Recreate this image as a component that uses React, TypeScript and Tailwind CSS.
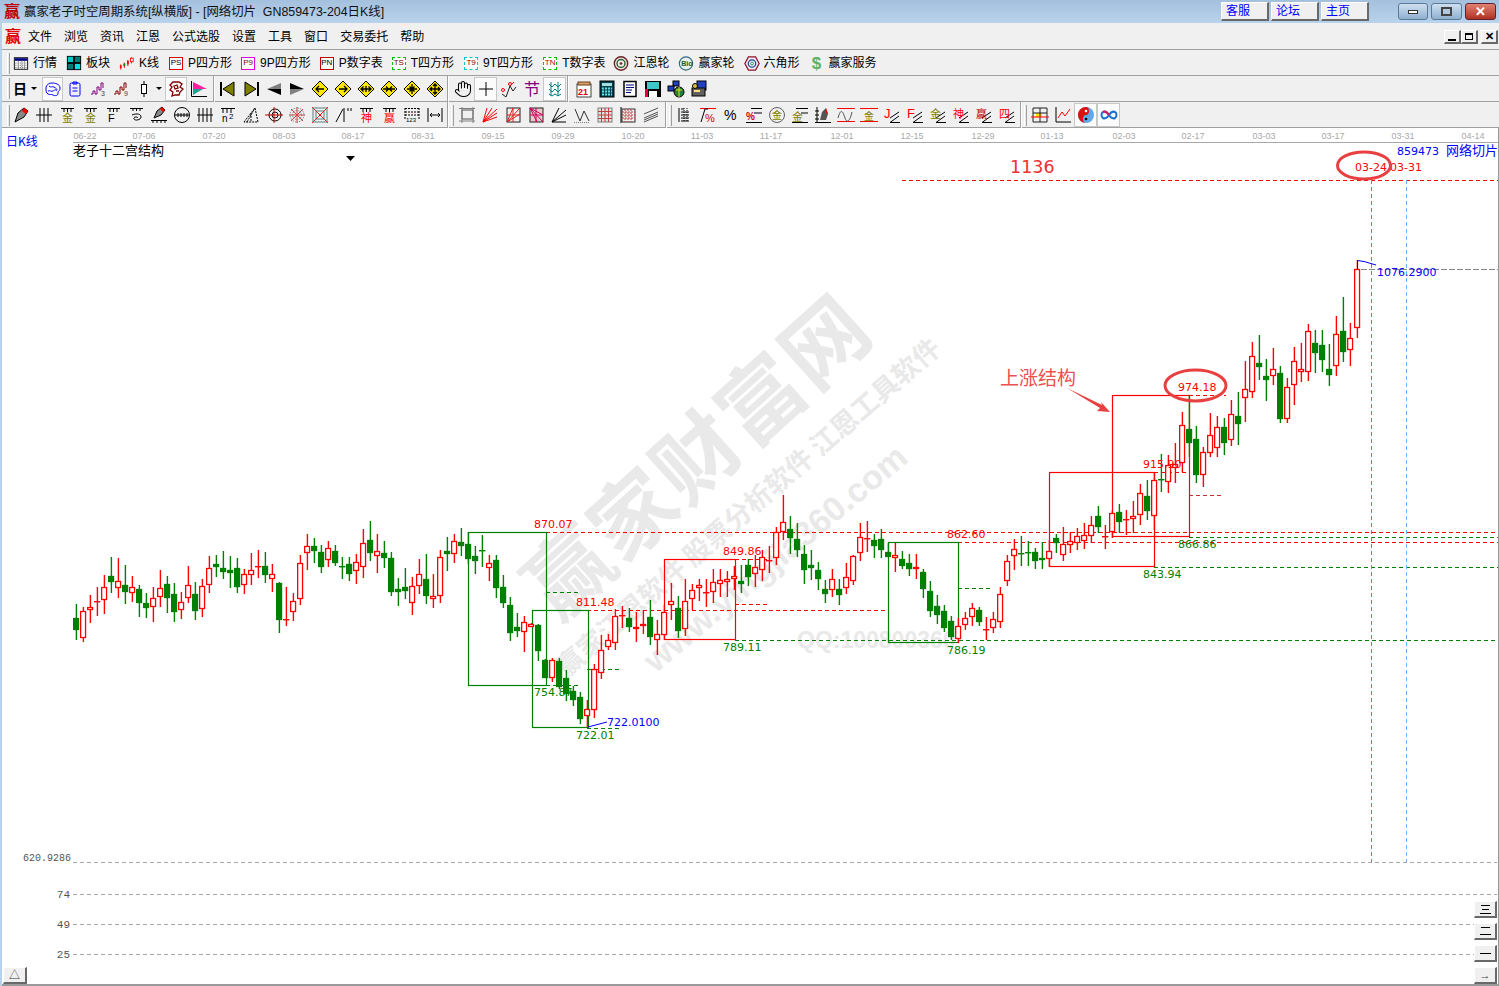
import React from 'react';
import { Hand } from 'lucide-react';

// [color, high, bodyTop, bodyBottom, low], one candle every 7px from x=76
type Candle = [string, number, number, number, number];
const CANDLES: Candle[] = [
  ['g',604,618,629,640],['r',607,611,637,642],['r',595,607,609,623],['r',587,601,601,616],['r',575,587,599,614],
  ['g',557,576,581,593],['r',558,581,587,598],['g',565,585,591,604],['r',576,587,592,602],['g',585,589,602,617],
  ['g',593,603,607,618],['r',587,598,606,622],['r',570,588,596,607],['g',576,584,597,613],['g',583,594,611,622],
  ['r',592,602,609,619],['r',566,585,597,603],['g',582,594,610,620],['r',579,586,608,617],['r',556,568,584,593],
  ['g',555,564,566,577],['g',551,568,571,579],['g',556,570,572,588],['g',558,568,586,593],['r',569,574,584,594],
  ['r',553,570,574,585],['r',550,566,566,578],['g',552,566,574,583],['r',564,574,578,592],['g',582,583,619,633],
  ['r',587,619,619,626],['r',593,601,611,621],['r',555,563,598,605],['r',534,546,552,570],['g',538,546,550,563],
  ['g',545,552,566,573],['r',541,548,559,567],['g',545,551,562,566],['g',557,566,566,579],['g',557,564,573,581],
  ['r',554,562,570,584],['r',529,543,566,578],['g',521,540,552,561],['r',534,551,555,573],['g',541,553,557,568],
  ['g',552,558,591,596],['g',578,589,591,606],['g',568,587,590,599],['r',577,586,602,615],['r',559,574,585,594],
  ['g',554,579,595,604],['r',574,596,598,608],['r',550,557,595,603],['g',537,551,553,571],['r',534,541,553,563],
  ['g',528,542,545,556],['g',532,544,558,564],['g',546,556,560,574],['g',535,550,550,567],['r',555,563,567,581],
  ['g',555,560,587,598],['g',575,587,602,608],['g',597,605,632,641],['g',613,627,630,637],['r',616,622,631,652],
  ['r',623,624,626,627],['g',624,625,650,661],['g',659,660,677,677],['r',658,660,677,682],['g',658,661,686,689],
  ['g',670,678,693,701],['g',686,691,699,706],['g',692,697,718,724],['r',700,709,715,727],['r',664,669,709,718],
  ['r',635,650,672,679],['r',634,640,646,650],['r',609,616,642,650],['r',606,615,615,628],['g',608,618,626,632],
  ['r',612,627,628,642],['r',610,624,625,634],['g',600,617,636,645],['r',620,634,639,655],['r',605,612,634,640],
  ['r',583,601,604,620],['g',596,608,630,638],['r',579,601,628,636],['r',584,590,598,610],['r',579,585,587,601],
  ['r',579,592,592,607],['r',569,582,591,603],['r',569,580,583,597],['r',571,579,581,597],['r',566,576,578,590],
  ['g',565,581,583,593],['g',559,565,576,586],['r',555,567,573,587],['r',550,557,569,581],['r',546,560,560,573],
  ['r',527,532,557,565],['r',495,522,531,540],['g',516,529,537,554],['g',523,539,549,557],['g',545,554,569,584],
  ['g',550,565,567,580],['g',562,570,578,590],['g',580,589,593,603],['r',569,579,589,597],['g',579,589,594,605],
  ['r',563,577,587,594],['r',555,556,580,585],['r',523,537,552,561],['r',521,538,538,552],['g',534,540,545,558],
  ['g',529,539,549,558],['g',543,552,556,557],['r',543,555,557,572],['g',551,559,565,569],['g',554,563,568,576],
  ['r',554,567,568,579],['g',569,572,588,598],['g',581,591,610,617],['g',595,606,614,624],['g',605,611,627,632],
  ['g',616,621,636,640],['r',618,626,638,643],['r',612,618,624,630],['r',603,608,616,626],['g',607,610,621,626],
  ['r',617,629,629,640],['r',612,619,627,633],['r',587,594,621,628],['r',555,561,580,586],['r',539,549,555,570],
  ['g',536,553,553,566],['g',541,552,552,566],['g',548,552,560,569],['g',542,558,559,569],['r',540,551,558,567],
  ['g',534,538,542,553],['r',527,544,554,561],['r',532,541,544,553],['r',528,536,542,550],['r',523,535,540,549],
  ['r',516,525,535,543],['g',506,516,526,533],['r',525,536,536,549],['r',510,513,531,538],['g',504,512,521,533],
  ['r',510,519,519,535],['r',501,516,518,533],['r',484,493,514,525],['g',480,496,510,520],['r',472,480,515,530],
  ['g',454,479,479,492],['r',455,465,481,493],['r',443,464,467,483],['r',412,425,462,472],['g',395,429,442,457],
  ['g',426,439,474,483],['r',447,452,474,487],['r',413,435,452,457],['r',416,427,447,457],['g',418,427,442,455],
  ['r',400,414,439,446],['g',392,416,423,445],['r',361,389,397,422],['r',342,356,391,398],['g',335,363,366,380],
  ['g',359,376,379,401],['r',348,369,375,385],['g',366,373,418,423],['r',378,387,418,423],['r',347,361,384,405],
  ['r',343,369,371,382],['r',324,331,371,381],['g',330,343,352,373],['g',330,345,359,372],['g',344,369,374,386],
  ['r',316,334,365,376],['g',297,331,351,362],['r',323,338,349,366],['r',260,269,327,338],
];

const DATES: [string, number][] = [
  ['06-22',85],['07-06',144],['07-20',214],['08-03',284],['08-17',353],['08-31',423],['09-15',493],
  ['09-29',563],['10-20',633],['11-03',702],['11-17',771],['12-01',842],['12-15',912],['12-29',983],
  ['01-13',1052],['02-03',1124],['02-17',1193],['03-03',1264],['03-17',1333],['03-31',1403],['04-14',1473],
];

const RED = '#ff0000';
const GREEN = '#008000';
const BLUE = '#0000ff';

// level lines of the chart: y, x1, x2, color
const DASHES: [number, number, number, string][] = [
  [180,902,1499,RED],[532,546,1499,RED],[542,958,1499,RED],[537,1189,1499,GREEN],[567,1154,1499,GREEN],
  [640,735,1499,GREEN],[610,587,888,RED],[592,546,580,GREEN],[685,546,580,GREEN],[669,587,622,GREEN],
  [728,587,622,GREEN],[559,735,770,RED],[604,735,770,RED],[588,958,993,GREEN],[472,1154,1190,RED],
  [395,1189,1226,RED],[495,1189,1224,'#c03030'],
];

// boxes: x, y, w, h, color
const BOXES: [number, number, number, number, string][] = [
  [468,532,78,153,GREEN],[532,610,56,117,GREEN],[664,559,71,80,RED],[888,542,70,100,GREEN],
  [1049,472,105,94,RED],[1112,395,77,141,RED],
];

const LABELS: [string, number, number, string][] = [
  ['870.07',534,528,RED],['811.48',576,606,RED],['849.86',723,555,RED],['862.60',947,538,RED],
  ['915.90',1143,468,RED],['974.18',1178,391,RED],['754.87',534,696,GREEN],['722.01',576,739,GREEN],
  ['789.11',723,651,GREEN],['786.19',947,654,GREEN],['843.94',1143,578,GREEN],['866.86',1178,548,GREEN],
  ['722.0100',607,726,BLUE],['1076.2900',1377,276,BLUE],['03-24',1355,171,RED],['03-31',1390,171,RED],
];

function Ico({ children, size = 18 }: { children: React.ReactNode; size?: number }) {
  return (
    <svg width={size} height={size} viewBox="0 0 18 18" fill="none" stroke="#000" strokeWidth="1">
      {children}
    </svg>
  );
}

function Tiny({ x, y, s = 8, c = '#000', w = 400, t }: { x: number; y: number; s?: number; c?: string; w?: number; t: string }) {
  return (
    <text x={x} y={y} fontSize={s} fontWeight={w} fill={c} stroke="none" className="[font-family:'Liberation_Sans','Noto_Sans_CJK_SC',sans-serif]">
      {t}
    </text>
  );
}

function Diamond({ d }: { d: string }) {
  return (
    <Ico>
      <polygon points="9,1 17,9 9,17 1,9" fill="#ffe800" stroke="#000" />
      <path d={d} strokeWidth="1.3" />
    </Ico>
  );
}

function Fan({ c = RED }: { c?: string }) {
  return (
    <Ico>
      <path d="M2 16L16 3M2 16L16 7M2 16L16 11M2 16L11 2M2 16L6 2" stroke={c} />
    </Ico>
  );
}

function TopLined({ t, c, s = 11, bars = 3 }: { t: string; c: string; s?: number; bars?: number }) {
  return (
    <Ico>
      <path d="M3 2.5h13" />
      {bars > 0 && <path d="M6 2v4M9.5 2v4M13 2v4" />}
      <Tiny x={9.5 - s / 2} y={16} s={s} c={c} t={t} />
    </Ico>
  );
}

function SlopeText({ t, c, s = 11 }: { t: string; c: string; s?: number }) {
  return (
    <Ico>
      <path d="M7 16.5h10M7 12l9-6M7 16.5l9-6.5" />
      <Tiny x={1} y={12} s={s} c={c} t={t} />
    </Ico>
  );
}

const T1_ICONS = {
  table: (
    <Ico size={17}>
      <rect x="1.5" y="2.5" width="15" height="13" fill="#fff" />
      <rect x="2" y="3" width="14" height="3" fill="#000080" stroke="none" />
      <path d="M2 8.5h14M2 11h14M2 13.5h14M6 6v9M10 6v9M13 6v9" stroke="#555" strokeDasharray="1 1" />
    </Ico>
  ),
  blocks: (
    <Ico size={18}>
      <rect x="1" y="1" width="16" height="16" fill="#000" stroke="none" />
      <rect x="2" y="2" width="6" height="6" fill="#00c8c8" stroke="none" />
      <rect x="10" y="2" width="6" height="6" fill="#007878" stroke="none" />
      <rect x="2" y="10" width="6" height="6" fill="#007878" stroke="none" />
      <rect x="10" y="10" width="6" height="6" fill="#00e0e0" stroke="none" />
    </Ico>
  ),
  kline: (
    <Ico size={17}>
      <path d="M2 10v6M6 8v6M10 5v7" stroke={RED} />
      <rect x="1" y="11" width="2" height="3" fill={RED} stroke="none" />
      <rect x="5" y="9" width="2" height="3" fill={GREEN} stroke="none" />
      <rect x="9" y="6" width="2" height="4" fill={RED} stroke="none" />
      <path d="M14 2v7" stroke={RED} />
      <rect x="13" y="3" width="3" height="4" fill="#fff" stroke={RED} />
    </Ico>
  ),
  wheel: (
    <Ico size={17}>
      <circle cx="9" cy="9" r="7.5" fill="#eee" stroke="#702020" strokeWidth="1.6" />
      <circle cx="9" cy="9" r="4.5" stroke="#306030" strokeWidth="1.6" />
      <circle cx="9" cy="9" r="1.5" fill="#702020" stroke="none" />
    </Ico>
  ),
  bio: (
    <Ico size={17}>
      <circle cx="9" cy="9" r="7.5" fill="#e8f0e8" stroke="#306880" strokeWidth="1.3" />
      <Tiny x={3.6} y={12} s={8} c="#206020" w={700} t="Bio" />
    </Ico>
  ),
  hex: (
    <Ico size={17}>
      <polygon points="5,1.5 13,1.5 17,9 13,16.5 5,16.5 1,9" stroke="#901030" strokeWidth="1.4" />
      <circle cx="9" cy="9" r="4.2" stroke="#2040a0" strokeWidth="1.4" />
      <circle cx="9" cy="9" r="1.6" stroke="#208080" />
    </Ico>
  ),
};

function LetterBox({ t, border, text, dashed }: { t: string; border: string; text: string; dashed?: boolean }) {
  return (
    <span className={`w-[14px] h-[13px] flex items-center justify-center border text-[8px] leading-none bg-white ${border} ${text} ${dashed ? 'border-dashed' : ''}`}>
      {t}
    </span>
  );
}

const T1_ITEMS: [React.ReactNode, string][] = [
  [T1_ICONS.table, '行情'],
  [T1_ICONS.blocks, '板块'],
  [T1_ICONS.kline, 'K线'],
  [<LetterBox t="PS" border="border-[#e00000]" text="text-black" />, 'P四方形'],
  [<LetterBox t="P9" border="border-[#e000e0]" text="text-[#800000]" />, '9P四方形'],
  [<LetterBox t="PN" border="border-[#c00000]" text="text-black" />, 'P数字表'],
  [<LetterBox t="TS" border="border-[#00c000]" text="text-[#800000]" dashed />, 'T四方形'],
  [<LetterBox t="T9" border="border-[#00c8c8]" text="text-[#800000]" dashed />, '9T四方形'],
  [<LetterBox t="TN" border="border-[#00c000]" text="text-[#c00000]" dashed />, 'T数字表'],
  [T1_ICONS.wheel, '江恩轮'],
  [T1_ICONS.bio, '赢家轮'],
  [T1_ICONS.hex, '六角形'],
  [<span className="w-[16px] text-center text-[17px] leading-none font-bold text-[#60b060]">$</span>, '赢家服务'],
];

const ARROW_LEFT = 'M13 9H5M8 6L5 9l3 3';
const ARROW_RIGHT = 'M5 9h8M10 6l3 3-3 3';
const ARROW_BOTH = 'M4 9h10M6.5 6.5L4 9l2.5 2.5M11.5 6.5L14 9l-2.5 2.5M9 6v6';
const ARROW_IN = 'M3 9h12M6 6.5L8.5 9 6 11.5M12 6.5L9.5 9l2.5 2.5';
const ARROW_CROSS = 'M4 9h10M9 4v10M6.5 6.5l5 5M11.5 6.5l-5 5';
const ARROW_OUT = 'M4 9h10M9 4v10M7 6l2-2 2 2M7 12l2 2 2-2M6 7L4 9l2 2M12 7l2 2-2 2';

const T2_ICONS: Record<string, React.ReactNode> = {
  brain: (
    <Ico>
      <path d="M2 8c0-3 3-5 6-5s8 1 8 5-2 2-2 5-3 3-5 2-3 0-5-1-2-3-2-6zM5 6c2 2 3 0 5 1s3 2 3 3M4 11c2-1 3 1 5 0s2-2 4 0" stroke={BLUE} />
    </Ico>
  ),
  clip: (
    <Ico>
      <rect x="4" y="3" width="10" height="13" rx="1.5" stroke={BLUE} />
      <path d="M7 2h4v2H7zM6.5 8h5M6.5 11h5" stroke={BLUE} />
    </Ico>
  ),
  stair3: (
    <Ico>
      <path d="M2 14h2v-3h2v3h2V7h2v3h2V3h2v5" stroke="#800080" />
      <Tiny x={12} y={16} s={7} c="#404040" t="3" />
    </Ico>
  ),
  stair9: (
    <Ico>
      <path d="M2 14h2v-3h2v3h2V7h2v3h2V3h2v5" stroke="#800000" />
      <Tiny x={12} y={16} s={7} c="#404040" t="9" />
    </Ico>
  ),
  candle: (
    <Ico>
      <path d="M9 1v4M9 13v4" />
      <rect x="6.5" y="4.5" width="5" height="9" fill="#fff" />
    </Ico>
  ),
  wave: (
    <Ico>
      <path d="M6 2h6l3 2-2 3 3 2-3 3-1 3H8l-3 1 1-4-3-2 2-3-2-2zM7 6l3-1 1 3-3 1zM9 11h3" stroke="#800000" strokeWidth="1.3" />
    </Ico>
  ),
  flag: (
    <Ico>
      <path d="M1.5 1v15.5H17" />
      <polygon points="3,2 17,9 3,9" fill="#ff20a0" stroke="none" />
      <polygon points="3,9 13,9 3,15" fill="#20a090" stroke="none" />
    </Ico>
  ),
  first: (
    <Ico>
      <rect x="1" y="2" width="2" height="14" fill="#000" stroke="none" />
      <polygon points="4,9 15,2 15,16" fill="#808000" stroke="#000" />
    </Ico>
  ),
  last: (
    <Ico>
      <rect x="15" y="2" width="2" height="14" fill="#000" stroke="none" />
      <polygon points="14,9 3,2 3,16" fill="#808000" stroke="#000" />
    </Ico>
  ),
  back: (
    <Ico>
      <polygon points="2,9 16,3 16,9" fill="#808080" stroke="none" />
      <polygon points="2,9 16,9 16,15" fill="#000" stroke="none" />
    </Ico>
  ),
  forward: (
    <Ico>
      <polygon points="16,9 2,3 2,9" fill="#000" stroke="none" />
      <polygon points="16,9 2,9 2,15" fill="#808080" stroke="none" />
    </Ico>
  ),
  plus: (
    <Ico>
      <path d="M9 2v14M2 9h14" />
    </Ico>
  ),
  vline: (
    <Ico>
      <path d="M2 14l4 3 4-11 3 5 3-4" stroke="#202020" />
      <path d="M10 6l4-4" stroke={RED} />
      <circle cx="3" cy="10" r="1.5" stroke={RED} />
      <circle cx="10" cy="4" r="1.5" stroke={RED} />
    </Ico>
  ),
  jie: (
    <Ico>
      <Tiny x={1} y={15} s={16} c="#800080" t="节" />
    </Ico>
  ),
  zigzag: (
    <Ico>
      <path d="M3 4l3 3 3-3 3 3 3-3M3 9l3 3 3-3 3 3 3-3M3 14l3 2 3-2 3 2 3-2M5 2v14M12 2v14" stroke="#008080" />
    </Ico>
  ),
  calendar: (
    <Ico>
      <rect x="2" y="4" width="14" height="13" fill="#fff" stroke="#404040" />
      <rect x="3" y="2" width="12" height="3" fill="#e0a060" stroke="#604020" />
      <Tiny x={3} y={15} s={9} c="#e00000" w={700} t="21" />
    </Ico>
  ),
  calc: (
    <Ico>
      <rect x="2" y="1" width="14" height="16" fill="#004050" stroke="#000" />
      <rect x="4" y="3" width="10" height="3" fill="#a0e0e0" stroke="none" />
      <path d="M4 8.5h10M4 11.5h10M4 14.5h10" stroke="#60e0e0" strokeDasharray="2 1" strokeWidth="2" />
    </Ico>
  ),
  doc: (
    <Ico>
      <rect x="3" y="1.5" width="12" height="15" fill="#fff" stroke="#000" strokeWidth="1.5" />
      <path d="M5 5h8M5 7.5h8M5 10h6M5 12.5h5" stroke="#000080" />
    </Ico>
  ),
  floppy: (
    <Ico>
      <rect x="1" y="1" width="16" height="16" fill="#000" stroke="none" />
      <rect x="3" y="2" width="12" height="7" fill="#40c8c8" stroke="none" />
      <rect x="5" y="11" width="8" height="6" fill="#fff" stroke="none" />
      <rect x="1" y="9" width="3" height="8" fill="#e00040" stroke="none" />
    </Ico>
  ),
  net: (
    <Ico>
      <rect x="6" y="1" width="6" height="5" fill="#2040c0" stroke="#000" />
      <rect x="1" y="6" width="6" height="5" fill="#2040c0" stroke="#000" />
      <circle cx="12" cy="12" r="5" fill="#208040" stroke="#000" />
      <path d="M9 10h6M12 7v10" stroke="#e0e020" />
    </Ico>
  ),
  print: (
    <Ico>
      <rect x="7" y="1" width="9" height="9" fill="#2040c0" stroke="#000" />
      <rect x="2" y="8" width="13" height="8" fill="#606060" stroke="#000" />
      <rect x="4" y="10" width="6" height="2" fill="#ffe080" stroke="none" />
      <circle cx="5" cy="6" r="2.5" fill="#e0c040" stroke="#000" />
    </Ico>
  ),
};

const T3_LEFT: React.ReactNode[] = [
  <Ico>
    <polygon points="3,16 6,7 12,2 16,5 12,11" fill="#888" stroke="#000" />
    <polygon points="12,2 16,5 14,8 10,5" fill={RED} stroke="none" />
  </Ico>,
  <Ico><path d="M5 2v14M9 2v14M13 2v14M1 9h16" /></Ico>,
  <TopLined t="金" c="#808000" />,
  <TopLined t="金" c="#808000" />,
  <TopLined t="F" c="#000" />,
  <Ico>
    <path d="M3 2.5h13M6 2v3M9.5 2v3M13 2v3" />
    <path d="M5 9c5-2 9-1 9 2s-6 4-7 2 3-3 4-1" />
  </Ico>,
  <Ico>
    <polygon points="4,12 7,5 12,1 15,4 11,9" fill="#888" stroke="#000" />
    <polygon points="12,1 15,4 13,6 10,3" fill={RED} stroke="none" />
    <path d="M1 14.5h16M3 14v3M7 14v3M11 14v3M15 14v3" />
  </Ico>,
  <Ico>
    <circle cx="9" cy="9" r="7.5" />
    <path d="M2 9h14M5 7v4M8 7v4M11 7v4M14 7v4" />
  </Ico>,
  <Ico><path d="M3 2v14M7 2v14M11 2v14M15 2v14M1 9h16" /></Ico>,
  <Ico>
    <path d="M2 2.5h14M4 2v5M8 2v5M12 2v5" />
    <Tiny x={3} y={16} s={10} t="n" />
    <Tiny x={10} y={13} s={8} t="2" />
  </Ico>,
  <Ico>
    <path d="M2 16L13 2l3 14zM9 7v9M5 16l8-14" strokeDasharray="2 1" />
  </Ico>,
  <Ico>
    <circle cx="10" cy="9" r="6" />
    <circle cx="10" cy="9" r="3" />
    <path d="M0 9h18M9 1v16" stroke="#d00000" />
  </Ico>,
  <Ico>
    <circle cx="9" cy="9" r="7" stroke="#508080" strokeDasharray="1 1" />
    <circle cx="9" cy="9" r="4.5" stroke="#508080" strokeDasharray="1 1" />
    <path d="M1 9h16M9 1v16M3 3l12 12M15 3L3 15" stroke="#d04040" />
  </Ico>,
  <Ico>
    <rect x="2" y="2" width="14" height="14" stroke="#508080" />
    <rect x="5" y="5" width="8" height="8" stroke="#508080" />
    <path d="M1 1l16 16M17 1L1 17" stroke="#e03030" />
    <rect x="8" y="8" width="2" height="2" fill={RED} stroke="none" />
  </Ico>,
  <Ico><path d="M2 16L9 3M10 2v14M14 2v3M17 2v3" /></Ico>,
  <TopLined t="神" c={RED} />,
  <TopLined t="赢" c={RED} />,
  <Ico>
    <path d="M2 2.5h14M2 2v12M16 2v12M2 6h14M2 9h14" strokeDasharray="2 1" />
    <Tiny x={3} y={16} s={6} t="123" />
  </Ico>,
  <Ico>
    <path d="M2 2v14M16 2v14M4 9h10M6 7L4 9l2 2M12 7l2 2-2 2" />
  </Ico>,
];

const T3_MID: React.ReactNode[] = [
  <Ico>
    <rect x="4" y="4" width="11" height="9" stroke="#505050" />
    <path d="M1 2.5h16M4 1v16M15 1v16M1 15h16" stroke="#808080" />
  </Ico>,
  <Fan />,
  <Ico>
    <rect x="3" y="2" width="13" height="14" stroke="#202020" />
    <path d="M3 16L16 2M3 16L16 8M3 16L9 2M3 9h13M9 2v14" stroke="#e02020" />
  </Ico>,
  <Ico>
    <rect x="3" y="2" width="13" height="14" fill="#e8c8c8" stroke="#202020" />
    <path d="M3 2L16 16M3 2l13 7M3 2l7 14M3 9h13M9 2v14" stroke="#d00060" />
  </Ico>,
  <Ico><path d="M2 16L16 4M2 16L16 9M2 16h14M2 16L9 2" /></Ico>,
  <Ico>
    <path d="M2 3l5 12 4-10 5 10" stroke="#303030" />
    <path d="M1 16.5h16" stroke="#808080" strokeDasharray="1 1" />
  </Ico>,
  <Ico>
    <rect x="2" y="2" width="14" height="14" fill="#e0e0e0" stroke="#808080" />
    <path d="M2 5.5h14M2 9h14M2 12.5h14M5.5 2v14M9 2v14M12.5 2v14" stroke="#c04040" />
  </Ico>,
  <Ico>
    <rect x="3" y="3" width="13" height="13" stroke="#303030" />
    <path d="M3 6h13M3 9h13M3 12h13M6 3v13M9 3v13M12 3v13" stroke="#c04040" strokeDasharray="2 1" />
    <path d="M2 1v16" />
  </Ico>,
  <Ico>
    <path d="M2 8l14-6M2 12l14-6M2 16l14-6M2 14l14-6" stroke="#505050" />
  </Ico>,
];

const T3_RIGHT: React.ReactNode[] = [
  <Ico>
    <path d="M3 2v14M5 3h3M5 6h8M5 9h8M5 12h8M5 15h8" />
    <path d="M8 2v14M11 2v14" strokeDasharray="1 1" />
  </Ico>,
  <Ico>
    <path d="M1 2.5h16" stroke={RED} />
    <path d="M2 16l4-13h3" />
    <Tiny x={6} y={16} s={11} c="#d00000" t="%" />
  </Ico>,
  <Ico><Tiny x={2} y={14} s={14} t="%" /></Ico>,
  <Ico>
    <path d="M6 2.5h11M9 7h8M1 16.5h16" />
    <Tiny x={1} y={14} s={10} c="#d00000" w={700} t="%" />
  </Ico>,
  <Ico>
    <circle cx="9" cy="9" r="7.5" stroke="#606060" />
    <Tiny x={4} y={13} s={10} c="#808000" t="金" />
  </Ico>,
  <Ico>
    <path d="M5 2.5h12M10 7h7M1 16.5h16" />
    <Tiny x={1} y={15} s={11} c="#808000" t="金" />
  </Ico>,
  <Ico>
    <path d="M3 1v16M1 5h4M1 9h4M1 13h4M1 16.5h16" />
    <polygon points="6,14 8,6 12,2 14,8 12,14" fill="#555" stroke="none" />
    <polygon points="12,2 14,8 11,6" fill={RED} stroke="none" />
  </Ico>,
  <Ico>
    <path d="M0 2.5h18M0 15.5h18" stroke={RED} />
    <path d="M1 12c3-11 5-6 7 0s5 3 7-6" stroke="#505050" />
  </Ico>,
  <Ico>
    <path d="M0 2.5h18M0 15.5h18" stroke={RED} />
    <Tiny x={4} y={13.5} s={10} c="#808000" t="金" />
  </Ico>,
  <SlopeText t="J" c={RED} s={13} />,
  <SlopeText t="F" c={RED} s={13} />,
  <SlopeText t="金" c="#808000" />,
  <SlopeText t="神" c={RED} />,
  <SlopeText t="赢" c="#c00000" />,
  <SlopeText t="四" c={RED} />,
];

const T3_END: React.ReactNode[] = [
  <Ico>
    <rect x="5" y="7" width="6" height="4" fill="#ffe000" stroke="none" />
    <path d="M2 2h14v14H2zM2 7h14M9 2v14" stroke="#202020" />
    <path d="M0 11h18" stroke={RED} />
  </Ico>,
  <Ico>
    <path d="M2 1v15h15" />
    <path d="M4 12l4-6 3 4 5-7" stroke={RED} />
  </Ico>,
  <Ico>
    <circle cx="9" cy="9" r="8" fill="#60a8e8" stroke="none" />
    <path d="M9 1a8 8 0 0 0 0 16c-4 0-4-8 0-8s4-8 0-8z" fill="#e01010" stroke="none" />
    <circle cx="9" cy="5" r="1.3" fill="#fff" stroke="none" />
    <circle cx="9" cy="13" r="1.3" fill="#000" stroke="none" />
  </Ico>,
  <Ico>
    <path d="M9 9c-2-3-4-4-6-3s-2 5 0 6 4 0 6-3 4-4 6-3 2 5 0 6-4 0-6-3z" stroke="#2070d0" strokeWidth="2" />
    <path d="M9 9c-2-3-4-4-6-3" stroke="#d02060" strokeWidth="2" />
  </Ico>,
];

function Grip() {
  return <span className="w-[3px] h-[21px] border-l border-l-white border-r border-r-[#a0a0a0] bg-[#e8e8e8]" />;
}

function Sep() {
  return <span className="w-[2px] h-[26px] border-l border-l-[#a0a0a0] border-r border-r-white" />;
}

function Slot({ children, on, width = 'w-[23px]' }: { children: React.ReactNode; on?: boolean; width?: string }) {
  return (
    <span className={`h-[24px] flex items-center justify-center shrink-0 ${width} ${on ? 'bg-[#fbfbfb] border border-[#c8c8c8]' : ''}`}>
      {children}
    </span>
  );
}

function DropArrow() {
  return <span className="w-0 h-0 border-x-[3px] border-x-transparent border-t-[3px] border-t-black" />;
}

function Bevel({ className, children }: { className: string; children?: React.ReactNode }) {
  return (
    <div className={`flex items-center justify-center bg-[#f0f0f0] border-t border-l border-t-white border-l-white border-r-2 border-b-2 border-r-[#696969] border-b-[#696969] ${className}`}>
      {children}
    </div>
  );
}

function Chart() {
  const cjk = "[font-family:'Noto_Sans_CJK_SC',sans-serif]";
  const num = "[font-family:'DejaVu_Sans','Noto_Sans_CJK_SC',sans-serif]";
  const wm = "[font-family:'Noto_Sans_CJK_SC',sans-serif] font-bold";
  return (
    <svg className="absolute top-0 left-0" width="1496" height="856" viewBox="2 128 1496 856">
      {/* date axis */}
      {DATES.map(([d, x]) => (
        <text key={d} x={x} y={139} textAnchor="middle" fontSize="9" fill="#a8a8a8" className="[font-family:'Liberation_Sans',sans-serif]">{d}</text>
      ))}
      <line x1="73" x2="1499" y1="142.5" y2="142.5" stroke="#a8a8a8" />

      {/* watermark */}
      <g fill="#e9e9e9">
        <text transform="translate(698,457) rotate(-42)" y="30" textAnchor="middle" fontSize="84" letterSpacing="2" className={wm}>赢家财富网</text>
        <text transform="translate(748,507) rotate(-41)" y="10" textAnchor="middle" fontSize="27" className={wm}>赢家江恩软件 股票分析软件 江恩工具软件</text>
        <text transform="translate(775,558) rotate(-40)" y="12" textAnchor="middle" fontSize="34" className="[font-family:'Liberation_Sans',sans-serif] font-bold">www.yingjia360.com</text>
        <text x="797" y="648" fontSize="23" className="[font-family:'Liberation_Sans',sans-serif] font-bold">QQ:100800360</text>
      </g>

      {/* price levels */}
      {DASHES.map(([y, x1, x2, c], i) => (
        <line key={i} x1={x1} x2={x2} y1={y + 0.5} y2={y + 0.5} stroke={c} strokeDasharray="4 3" />
      ))}
      <line x1="1371.5" x2="1371.5" y1="180" y2="862" stroke="#cc6060" strokeDasharray="4 3" />
      <line x1="1406.5" x2="1406.5" y1="180" y2="862" stroke="#66b2ff" strokeDasharray="4 3" />
      <line x1="1361" x2="1499" y1="269.5" y2="269.5" stroke="#888" strokeDasharray="6 2" />
      {[862, 894].map((y) => (
        <line key={y} x1="73" x2="1497" y1={y + 0.5} y2={y + 0.5} stroke="#a8a8a8" strokeDasharray="4 3" />
      ))}
      {[924, 954].map((y) => (
        <line key={y} x1="73" x2="1474" y1={y + 0.5} y2={y + 0.5} stroke="#a8a8a8" strokeDasharray="4 3" />
      ))}

      {/* structure boxes */}
      {BOXES.map(([x, y, w, h, c], i) => (
        <rect key={i} x={x + 0.5} y={y + 0.5} width={w} height={h} fill="none" stroke={c} strokeWidth="1.2" />
      ))}

      {/* candles */}
      {CANDLES.map(([c, hi, top, bot, lo], i) => {
        const x = 76 + i * 7;
        const col = c === 'r' ? RED : GREEN;
        return (
          <g key={i}>
            <rect x={x - 0.3} y={hi} width="1.4" height={lo - hi} fill={col} />
            {bot <= top ? (
              <rect x={x - 3} y={top} width="6.4" height="1.4" fill={col} />
            ) : (
              <rect x={x - 2.35} y={top + 0.5} width="4.9" height={bot - top} fill={c === 'r' ? '#fff' : col} stroke={col} strokeWidth="1.3" />
            )}
          </g>
        );
      })}

      {/* blue pointers */}
      <path d="M588 727L607 722M1357.5 269V260.5L1364 261.5L1376 265" fill="none" stroke={BLUE} />

      {/* labels */}
      {LABELS.map(([t, x, y, c]) => (
        <text key={t} x={x} y={y} fontSize="11" fill={c} className={num}>{t}</text>
      ))}
      <text x="1010" y="173" fontSize="17.5" fill="#ee3030" className={num}>1136</text>
      <text x="6" y="146" fontSize="12" fill={BLUE} className={cjk}>日K线</text>
      <text x="73" y="155" fontSize="13" fill="#000" className={cjk}>老子十二宫结构</text>
      <polygon points="346,156 355,156 350.5,161" fill="#000" />
      <text x="1397" y="155" fontSize="11" fill={BLUE} className={num}>859473</text>
      <text x="1446" y="155" fontSize="13" fill={BLUE} className={cjk}>网络切片</text>
      <text x="23" y="861" fontSize="10" fill="#555" className="[font-family:'Liberation_Mono',monospace]">620.9286</text>
      {[['74', 898], ['49', 928], ['25', 958]].map(([t, y]) => (
        <text key={t} x="70" y={y} textAnchor="end" fontSize="11" fill="#555" className="[font-family:'Liberation_Mono',monospace]">{t}</text>
      ))}

      {/* hand drawn notes */}
      <ellipse cx="1364" cy="165.5" rx="26.5" ry="13.5" fill="none" stroke="#e84040" strokeWidth="3" />
      <ellipse cx="1195.5" cy="385.5" rx="30.5" ry="15.5" fill="none" stroke="#e84040" strokeWidth="3" />
      <text x="1000" y="385" fontSize="19" fill="#ec5050" className={cjk}>上涨结构</text>
      <polygon points="1067,388 1102,405 1101,402 1110,412 1097,411 1100,408" fill="#e84040" />
    </svg>
  );
}

export default function App() {
  return (
    <div className="w-[1499px] h-[986px] flex flex-col overflow-hidden pl-[2px] bg-[#b9d1ea] text-[12px] text-black [font-family:'Liberation_Sans','Noto_Sans_CJK_SC',sans-serif]">
      {/* title bar */}
      <div className="h-[23px] -ml-[2px] flex items-center shrink-0 bg-linear-to-b from-[#a3c0dd] to-[#bad3ec]">
        <span className="w-[24px] text-center text-[16px] leading-none font-bold text-[#c00000]">赢</span>
        <span className="whitespace-pre pt-px text-[12.4px] text-[#111]">赢家老子时空周期系统[纵横版] - [网络切片  GN859473-204日K线]</span>
        <div className="ml-auto flex items-center gap-[2px] text-[12px] text-[#0000ff]">
          {['客服', '论坛', '主页'].map((t) => (
            <Bevel key={t} className="w-[48px] h-[19px] !justify-start pl-[4px]">{t}</Bevel>
          ))}
        </div>
        <div className="ml-[29px] mr-[3px] flex items-center gap-[3px]">
          <div className="w-[30px] h-[17px] flex items-center justify-center rounded-[3px] border border-[#5a7a9a] bg-linear-to-b from-[#cfe0f0] to-[#8fb0cf]">
            <span className="w-[10px] h-[4px] bg-white border border-[#333]" />
          </div>
          <div className="w-[31px] h-[17px] flex items-center justify-center rounded-[3px] border border-[#5a7a9a] bg-linear-to-b from-[#cfe0f0] to-[#8fb0cf]">
            <span className="w-[11px] h-[9px] bg-[#b0c8e0] border-2 border-[#444]" />
          </div>
          <div className="w-[31px] h-[17px] flex items-center justify-center rounded-[3px] border border-[#602030] bg-linear-to-b from-[#e08070] to-[#b03020] text-[13px] leading-none font-bold text-white">
            ✕
          </div>
        </div>
      </div>

      {/* menu bar */}
      <div className="h-[27px] flex items-center shrink-0 pr-[1px] pt-px bg-[#f0f0f0] border-b border-[#a0a0a0]">
        <span className="w-[22px] mr-[4px] text-center text-[16px] leading-none font-bold text-[#e00000]">赢</span>
        <div className="flex gap-[12px]">
          {['文件', '浏览', '资讯', '江恩', '公式选股', '设置', '工具', '窗口', '交易委托', '帮助'].map((m) => (
            <span key={m}>{m}</span>
          ))}
        </div>
        <div className="ml-auto flex items-center">
          <Bevel className="w-[17px] h-[14px] text-[10px] leading-none"><span className="w-[8px] h-[2px] mt-[7px] bg-black" /></Bevel>
          <Bevel className="w-[17px] h-[14px]"><span className="w-[8px] h-[7px] border border-black border-t-2" /></Bevel>
          <Bevel className="w-[17px] h-[14px] ml-[3px] text-[11px] leading-none font-bold">✕</Bevel>
        </div>
      </div>

      {/* main toolbar */}
      <div className="h-[26px] flex items-center shrink-0 pl-[5px] pt-px bg-[#f0f0f0] border-b border-[#a0a0a0]">
        <Grip />
        <div className="flex items-center ml-[3px]">
          {T1_ITEMS.map(([icon, label], i) => (
            <div key={label} className={`flex items-center gap-[4px] ${i === 3 || i === 4 || i === 5 || i === 8 ? 'mr-[8px]' : 'mr-[9px]'}`}>
              <span className="w-[16px] h-[18px] flex items-center justify-center shrink-0">{icon}</span>
              <span className="whitespace-nowrap">{label}</span>
            </div>
          ))}
        </div>
      </div>

      {/* period and navigation toolbar */}
      <div className="h-[26px] flex items-center shrink-0 pl-[5px] bg-[#f0f0f0] border-b border-[#a0a0a0]">
        <Grip />
        <div className="w-[32px] flex items-center gap-[4px] pl-[3px] text-[14px] leading-none font-bold">
          日<DropArrow />
        </div>
        <Slot on width="w-[21px]">{T2_ICONS.brain}</Slot>
        <Slot>{T2_ICONS.clip}</Slot>
        <Slot>{T2_ICONS.stair3}</Slot>
        <Slot>{T2_ICONS.stair9}</Slot>
        <Slot>{T2_ICONS.candle}</Slot>
        <span className="w-[10px] flex pl-[1px]"><DropArrow /></span>
        <Slot on width="w-[22px]">{T2_ICONS.wave}</Slot>
        <Slot>{T2_ICONS.flag}</Slot>
        <span className="w-[3px]" />
        <Sep />
        <span className="w-[1px]" />
        <Slot>{T2_ICONS.first}</Slot>
        <Slot>{T2_ICONS.last}</Slot>
        <Slot>{T2_ICONS.back}</Slot>
        <Slot>{T2_ICONS.forward}</Slot>
        <Slot><Diamond d={ARROW_LEFT} /></Slot>
        <Slot><Diamond d={ARROW_RIGHT} /></Slot>
        <Slot><Diamond d={ARROW_BOTH} /></Slot>
        <Slot><Diamond d={ARROW_IN} /></Slot>
        <Slot><Diamond d={ARROW_CROSS} /></Slot>
        <Slot><Diamond d={ARROW_OUT} /></Slot>
        <span className="w-[1px]" />
        <Sep />
        <span className="w-[2px]" />
        <Slot><Hand size={18} strokeWidth={1.4} /></Slot>
        <Slot on>{T2_ICONS.plus}</Slot>
        <Slot>{T2_ICONS.vline}</Slot>
        <Slot>{T2_ICONS.jie}</Slot>
        <Slot on>{T2_ICONS.zigzag}</Slot>
        <span className="w-[1px]" />
        <Sep />
        <span className="w-[3px]" />
        <Slot>{T2_ICONS.calendar}</Slot>
        <Slot>{T2_ICONS.calc}</Slot>
        <Slot>{T2_ICONS.doc}</Slot>
        <Slot>{T2_ICONS.floppy}</Slot>
        <Slot>{T2_ICONS.net}</Slot>
        <Slot>{T2_ICONS.print}</Slot>
      </div>

      {/* drawing toolbar */}
      <div className="h-[26px] flex items-center shrink-0 pl-[5px] pt-px bg-[#f0f0f0] border-b border-[#a0a0a0]">
        <Grip />
        <span className="-ml-[1px]" />
        {T3_LEFT.map((icon, i) => <Slot key={i}>{icon}</Slot>)}
        <span className="w-[1px]" />
        <Sep />
        <span className="w-[2px]" />
        <Grip />
        <span className="w-[1px]" />
        {T3_MID.map((icon, i) => <Slot key={i}>{icon}</Slot>)}
        <span className="w-[3px]" />
        <Sep />
        <span className="w-[2px]" />
        <Grip />
        <span className="w-[1px]" />
        {T3_RIGHT.map((icon, i) => <Slot key={i}>{icon}</Slot>)}
        <span className="w-[2px]" />
        <Sep />
        <span className="w-[2px]" />
        <Grip />
        <span className="w-[1px]" />
        {T3_END.map((icon, i) => <Slot key={i} on={i > 1}>{icon}</Slot>)}
      </div>

      {/* chart */}
      <div className="relative flex-1 bg-white border-b-2 border-r border-[#999]">
        <Chart />
        <Bevel className="absolute left-[1px] bottom-0 w-[24px] h-[17px] text-[11px] leading-none text-[#333]">△</Bevel>
        <div className="absolute right-[1px] bottom-0 flex flex-col gap-[5px]">
          <Bevel className="w-[23px] h-[17px] flex-col gap-[3px]">
            <span className="w-[9px] h-px bg-black" />
            <span className="w-[7px] h-px bg-black" />
            <span className="w-[11px] h-px bg-black" />
          </Bevel>
          <Bevel className="w-[23px] h-[17px] flex-col gap-[6px]">
            <span className="w-[9px] h-px bg-black" />
            <span className="w-[11px] h-px bg-black" />
          </Bevel>
          <Bevel className="w-[23px] h-[17px]">
            <span className="w-[11px] h-px bg-black" />
          </Bevel>
          <Bevel className="w-[23px] h-[17px] text-[11px] leading-none text-[#444]">→</Bevel>
        </div>
      </div>
    </div>
  );
}
